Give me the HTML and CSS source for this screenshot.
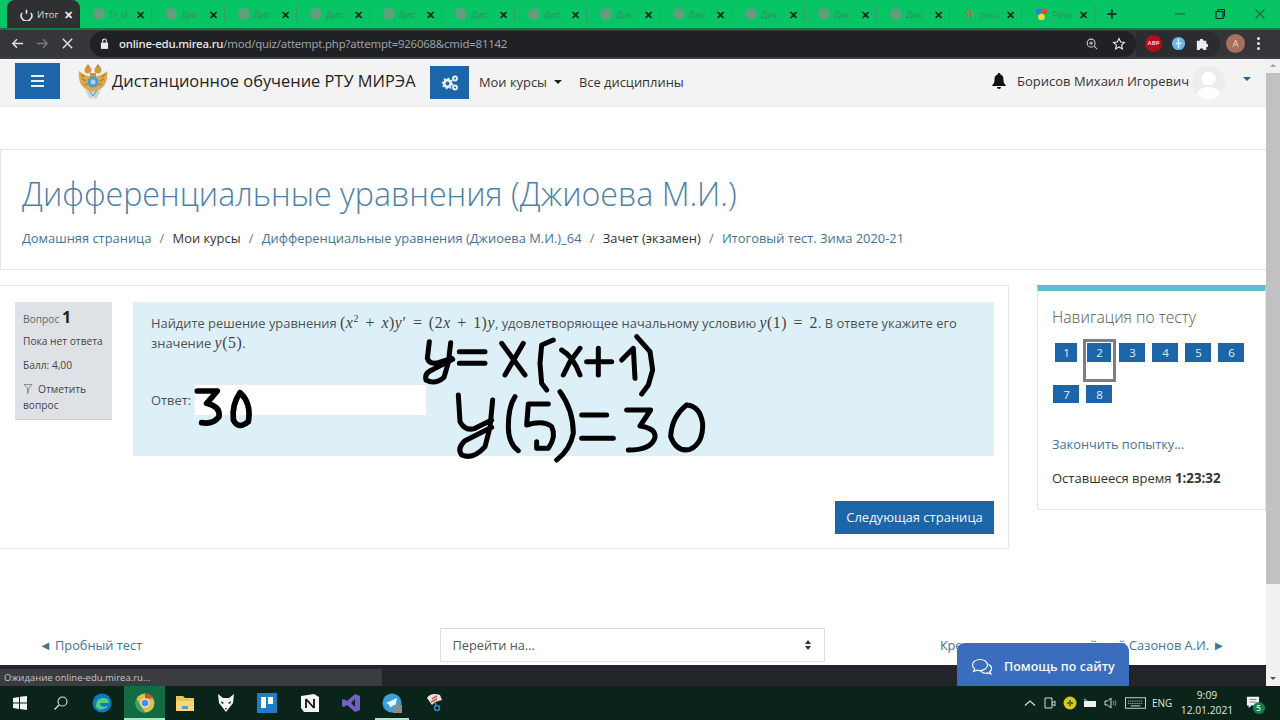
FILE: index.html
```html
<!DOCTYPE html>
<html lang="ru">
<head>
<meta charset="utf-8">
<title>Итоговый тест</title>
<link rel="stylesheet" href="styles.css">
</head>
<body>
<div class="screen">
  <div class="tabstrip">
    <div class="tab active"><svg class="fav" viewBox="0 0 16 16"><path d="M2.500 6a6.500 6.500 0 1 0 11 0M8 2v5" fill="none" stroke="#dfe1e5" stroke-width="2"/></svg><span class="tab-t">Итог</span><span class="tab-x">✕</span></div>
    <div class="tab"><i class="globe"></i><span class="tab-t">Tr_d</span><span class="tab-x">✕</span></div>
    <div class="tab"><i class="globe"></i><span class="tab-t">Дис</span><span class="tab-x">✕</span></div>
    <div class="tab"><i class="globe"></i><span class="tab-t">Дис</span><span class="tab-x">✕</span></div>
    <div class="tab"><i class="globe"></i><span class="tab-t">Дис</span><span class="tab-x">✕</span></div>
    <div class="tab"><i class="globe"></i><span class="tab-t">Дис</span><span class="tab-x">✕</span></div>
    <div class="tab"><i class="globe"></i><span class="tab-t">Дис</span><span class="tab-x">✕</span></div>
    <div class="tab"><i class="globe"></i><span class="tab-t">Дис</span><span class="tab-x">✕</span></div>
    <div class="tab"><i class="globe"></i><span class="tab-t">Дис</span><span class="tab-x">✕</span></div>
    <div class="tab"><i class="globe"></i><span class="tab-t">Дис</span><span class="tab-x">✕</span></div>
    <div class="tab"><i class="globe"></i><span class="tab-t">Дис</span><span class="tab-x">✕</span></div>
    <div class="tab"><i class="globe"></i><span class="tab-t">Дис</span><span class="tab-x">✕</span></div>
    <div class="tab"><i class="globe"></i><span class="tab-t">Дис</span><span class="tab-x">✕</span></div>
    <div class="tab"><span class="ya">Я</span><span class="tab-t">реш</span><span class="tab-x">✕</span></div>
    <div class="tab"><svg class="fav" viewBox="0 0 16 16"><circle cx="4.500" cy="4" r="3.500" fill="#2f7fd6"/><circle cx="11.500" cy="4" r="3.500" fill="#e2492f"/><circle cx="8" cy="11" r="4" fill="#f4d83a"/></svg><span class="tab-t">Реш</span><span class="tab-x">✕</span></div>
    <div class="newtab">+</div>
    <div class="winctl">
      <svg class="wc" viewBox="0 0 12 12"><path d="M1 6h10" stroke="#1d6a42" stroke-width="1.200"/></svg>
      <svg class="wc" viewBox="0 0 12 12"><path d="M2 3.500h7v7H2zM4 3.500V1.500h6.500V8H9" fill="none" stroke="#123" stroke-width="1.100"/></svg>
      <svg class="wc" viewBox="0 0 12 12"><path d="M1.500 1.500l9 9M10.500 1.500l-9 9" stroke="#1d6a42" stroke-width="1.200"/></svg>
    </div>
  </div>

  <div class="toolbar">
    <svg class="tb-ic" viewBox="0 0 16 16"><path d="M14 8H3M7.500 3.500L3 8l4.500 4.500" fill="none" stroke="#dee1e6" stroke-width="1.600"/></svg>
    <svg class="tb-ic" viewBox="0 0 16 16"><path d="M2 8h11M8.500 3.500L13 8l-4.500 4.500" fill="none" stroke="#777a7f" stroke-width="1.600"/></svg>
    <svg class="tb-ic" viewBox="0 0 16 16"><path d="M3 3l10 10M13 3L3 13" fill="none" stroke="#dee1e6" stroke-width="1.600"/></svg>
    <div class="omnibox">
      <svg class="lock" viewBox="0 0 10 12"><path d="M1 5h8v7H1z" fill="#e8eaed"/><path d="M3 5V3a2 2 0 0 1 4 0v2" fill="none" stroke="#e8eaed" stroke-width="1.300"/></svg>
      <span class="url"><b>online-edu.mirea.ru</b>/mod/quiz/attempt.php?attempt=926068&amp;cmid=81142</span>
      <svg class="omni-ic" viewBox="0 0 16 16"><circle cx="7" cy="7" r="4.500" fill="none" stroke="#c6c8cc" stroke-width="1.300"/><path d="M10.500 10.500L14 14M5 7h4M7 5v4" stroke="#c6c8cc" stroke-width="1.200"/></svg>
      <svg class="omni-ic" viewBox="0 0 16 16"><path d="M8 1.800l1.900 4 4.300.5-3.200 3 .9 4.300L8 11.400l-3.900 2.200.9-4.300-3.200-3 4.300-.5z" fill="none" stroke="#e8eaed" stroke-width="1.300"/></svg>
    </div>
    <div class="exts">
      <span class="abp">ABP</span>
      <svg class="ext" viewBox="0 0 16 16"><circle cx="8" cy="8" r="7" fill="#6fb7e3"/><path d="M8 3v10M5 8h6" stroke="#dff1fb" stroke-width="1.500"/></svg>
      <svg class="ext" viewBox="0 0 16 16"><path d="M2 5h3a2 2 0 0 1 4 0h3v3a2 2 0 0 1 0 4v3H9a2 2 0 0 0-4 0H2z" fill="#eceef0"/></svg>
    </div>
    <span class="profile">A</span>
    <span class="dots"><i></i><i></i><i></i></span>
  </div>

  <div class="viewport">
    <div class="page">
      <header class="navbar">
        <span class="burger"><i></i><i></i><i></i></span>
        <svg class="emblem" viewBox="0 0 30 36">
          <path d="M15 15C11 10 7 13 1 7c-1 7 1 13 4 16 3 3 6 3 8 5h4c2-2 5-2 8-5 3-3 5-9 4-16-6 6-10 3-14 8z" fill="#dca94f"/>
          <path d="M3 10l3 3M4 15l4 2M6 20l4 1M27 10l-3 3M26 15l-4 2M24 20l-4 1" stroke="#a9782f" stroke-width="1.200"/>
          <circle cx="10" cy="6" r="3.500" fill="#d19a41"/><circle cx="20" cy="6" r="3.500" fill="#d19a41"/>
          <path d="M8 3l2-3 2 3zM18 3l2-3 2 3z" fill="#b98632"/>
          <path d="M12 9h6v6h-6z" fill="#c9963f"/>
          <circle cx="15" cy="18" r="5.500" fill="#4f9bd3"/>
          <circle cx="15" cy="18" r="2.500" fill="#a9d6ee"/>
          <path d="M7 25c3 3 13 3 16 0l-2 5-3 5-3-2-3 2-3-5z" fill="#c6d4d6"/>
          <path d="M11 26l4 6 4-6" fill="none" stroke="#6a9aa3" stroke-width="1"/>
        </svg>
        <span class="brand">Дистанционное обучение РТУ МИРЭА</span>
        <span class="cogs"><svg viewBox="0 0 18 18"><circle cx="6.500" cy="9.500" r="3.300" fill="none" stroke="#e9f1f8" stroke-width="2.800"/><circle cx="6.500" cy="9.500" r="5.200" fill="none" stroke="#e9f1f8" stroke-width="1.400" stroke-dasharray="1.800 2.200"/><circle cx="14" cy="4.500" r="2" fill="none" stroke="#e9f1f8" stroke-width="1.900"/><circle cx="14" cy="13.500" r="2" fill="none" stroke="#e9f1f8" stroke-width="1.900"/></svg></span>
        <span class="nav-l">Мои курсы<i class="caret"></i></span>
        <span class="nav-l">Все дисциплины</span>
        <span class="nav-r">
          <svg class="bell" viewBox="0 0 14 16"><path d="M7 0a1.200 1.200 0 0 1 1.200 1.500C11 2.200 11.500 4.500 11.500 7c0 3 1 4 2.300 5.300V13H.2v-.7C1.500 11 2.500 10 2.500 7c0-2.500.5-4.800 3.300-5.500A1.200 1.200 0 0 1 7 0zM5 14h4a2 2 0 0 1-4 0z" fill="#111"/></svg>
          <span class="user">Борисов Михаил Игоревич</span>
          <svg class="avatar" viewBox="0 0 33 33"><defs><clipPath id="av"><circle cx="16.500" cy="16.500" r="16.500"/></clipPath></defs><g clip-path="url(#av)"><rect width="33" height="33" fill="#ececec"/><circle cx="16.500" cy="12.500" r="7" fill="#fff"/><path d="M4 33c0-9 6-12 12.500-12S29 24 29 33z" fill="#fff"/></g></svg>
          <i class="caret blue"></i>
        </span>
      </header>

      <section class="page-head">
        <h1>Дифференциальные уравнения (Джиоева М.И.)</h1>
        <nav class="crumbs">
          <a>Домашняя страница</a><s>/</s><span>Мои курсы</span><s>/</s><a>Дифференциальные уравнения (Джиоева М.И.)_64</a><s>/</s><span>Зачет (экзамен)</span><s>/</s><a>Итоговый тест. Зима 2020-21</a>
        </nav>
      </section>

      <div class="columns">
        <main class="quiz">
          <div class="q-row">
            <aside class="q-info">
              <p class="q-no">Вопрос <b>1</b></p>
              <p>Пока нет ответа</p>
              <p>Балл: 4,00</p>
              <p class="q-flag"><svg class="flag" viewBox="0 0 10 12"><path d="M1 1.500h8L6 5v1L4.500 11V5z" fill="none" stroke="#777" stroke-width=".8"/></svg>Отметить вопрос</p>
            </aside>
            <div class="q-body">
              <p class="q-text">Найдите решение уравнения <span class="m">(<i>x</i><sup>2</sup> + <i>x</i>)<i>y</i>′ = (2<i>x</i> + 1)<i>y</i></span>, удовлетворяющее начальному условию <span class="m"><i>y</i>(1) = 2</span>. В ответе укажите его значение <span class="m"><i>y</i>(5)</span>.</p>
              <div class="answer"><label>Ответ:</label><span class="a-input"></span></div>
            </div>
          </div>
          <div class="next-row"><span class="btn">Следующая страница</span></div>
        </main>
        <aside class="side">
          <h2>Навигация по тесту</h2>
          <div class="q-nav">
            <span class="qb">1</span><span class="qb cur">2</span><span class="qb">3</span><span class="qb">4</span><span class="qb">5</span><span class="qb">6</span><span class="qb">7</span><span class="qb">8</span>
          </div>
          <a class="finish">Закончить попытку...</a>
          <p class="timer">Оставшееся время <b>1:23:32</b></p>
        </aside>
      </div>

      <div class="jump">
        <a>◄ Пробный тест</a>
        <span class="select">Перейти на...<svg viewBox="0 0 8 12"><path d="M4 1l3 4H1zM4 11L1 7h6z" fill="#333"/></svg></span>
        <a><span class="tight">Кредитная сессия: английский</span> Сазонов А.И. ►</a>
      </div>
      <footer class="foot"><span>Информация (Вопросы)</span><span>Email: edu@mirea.ru</span></footer>
    </div>
    <div class="scrollbar"><span class="sb-up"></span><span class="sb-thumb"></span><span class="sb-dn"></span></div>
  </div>

  <div class="taskbar">
    <svg class="tk" viewBox="-2 -2 20 20"><path d="M1 3l6-1v5.500H1zM8 1.800L15 1v6.500H8zM1 8.500h6V14l-6-1zM8 8.500h7V15l-7-1z" fill="#f2f5f3"/></svg>
    <svg class="tk" viewBox="-2 -2 20 20"><circle cx="9.500" cy="6.500" r="4.500" fill="none" stroke="#dfe5e2" stroke-width="1.100"/><path d="M6 10l-4.500 4.500" stroke="#dfe5e2" stroke-width="1.200"/></svg>
    <svg class="tk tk-edge" viewBox="0 0 20 20"><circle cx="10" cy="10" r="9.500" fill="#0f78c8"/><path d="M4 13c0-6 4-8 7-8 4 0 6 2 6 5H8c0 3 3 5 8 3-2 4-12 5-12 0z" fill="#4ed07f"/></svg>
    <span class="tk-active"><svg class="tk" viewBox="0 0 20 20"><circle cx="10" cy="10" r="9.500" fill="#d8c34a"/><path d="M10 .5a9.500 9.500 0 0 1 8.500 5H10z" fill="#d9483b"/><path d="M1.500 5.500L6 13l4 6.500A9.500 9.500 0 0 1 1.500 5.500z" fill="#3ca35a"/><circle cx="10" cy="10" r="4.500" fill="#fff"/><circle cx="10" cy="10" r="3.500" fill="#4b8fe0"/></svg></span>
    <svg class="tk" viewBox="0 0 20 20"><path d="M1 3h7l2 2h9v13H1z" fill="#e9c659"/><path d="M1 8h18v10H1z" fill="#f3d779"/><path d="M7 13h6v3H7z" fill="#5a9bc9"/></svg>
    <svg class="tk" viewBox="0 0 20 20"><path d="M2 1l5 4h6l5-4-1 9-7 9-7-9z" fill="#f4f4f4"/><path d="M5 8l3 2-2 1zM15 8l-3 2 2 1zM9 15h2l-1 2z" fill="#111"/></svg>
    <svg class="tk tk-trello" viewBox="0 0 20 20"><rect width="20" height="20" fill="#1d7ec6"/><rect x="4" y="4" width="5" height="11" fill="#fff"/><rect x="11" y="4" width="5" height="7" fill="#fff"/></svg>
    <svg class="tk" viewBox="0 0 20 20"><path d="M1 3l13-2 5 3v15H4l-3-4z" fill="#f5f5f5"/><path d="M6 6v9M6 6l8 9M14 6v9" stroke="#111" stroke-width="1.800" fill="none"/></svg>
    <svg class="tk" viewBox="0 0 20 20"><path d="M14 1l5 2v14l-5 2-8-7-3 2-2-1V7l2-1 3 2zM14 6l-4 4 4 4z" fill="#7160c4"/></svg>
    <span class="tk-open"><svg class="tk" viewBox="0 0 20 20"><circle cx="10" cy="10" r="9.500" fill="#36a3d9"/><path d="M4 10l11-5-2 10-3-2-2 2-.5-3z" fill="#eaf6fc"/><rect x="11" y="12" width="9" height="8" fill="#8a8f8d"/></svg></span>
    <svg class="tk" viewBox="0 0 20 20"><path d="M3 5c2-4 8-5 13-3l2 5-7 2-3 3z" fill="#eae0dc"/><path d="M8 6l5-3M7 9l6-3" stroke="#c85b5b" stroke-width="1.500"/><circle cx="13" cy="15" r="2.500" fill="none" stroke="#3b8cd0" stroke-width="1.400"/><path d="M11 9l1 4" stroke="#3b8cd0" stroke-width="1.400"/></svg>
    <div class="tray">
      <svg class="tr" viewBox="0 0 14 14"><path d="M2 9.500L7 5l5 4.500" fill="none" stroke="#d5dcd8" stroke-width="1.200"/></svg>
      <svg class="tr" viewBox="0 0 14 14"><path d="M2 2h7v10H2zM9 7l3-2v5l-3-2" fill="none" stroke="#d5dcd8" stroke-width="1"/></svg>
      <svg class="tr" viewBox="0 0 14 14"><circle cx="7" cy="7" r="6.500" fill="#d8c520"/><path d="M7 4v6M4 7h6" stroke="#3c7a1e" stroke-width="2"/></svg>
      <svg class="tr" viewBox="0 0 14 14"><rect x="1" y="5" width="12" height="6" fill="#eef2f0"/><path d="M1 3l3 2" stroke="#6db7e0" stroke-width="1.500"/></svg>
      <svg class="tr" viewBox="0 0 14 14"><path d="M2 5h2.500L8 2v10L4.500 9H2z" fill="none" stroke="#d5dcd8"/><path d="M10 5q1.500 2 0 4M12 4q2 3 0 6" fill="none" stroke="#7f8d86"/></svg>
      <svg class="kb" viewBox="0 0 22 12"><rect x=".5" y=".5" width="21" height="11" fill="none" stroke="#cfd6d2"/><path d="M3 4h16M3 6.500h16" stroke="#cfd6d2" stroke-dasharray="1 1"/><path d="M6 9h10" stroke="#cfd6d2"/></svg>
      <span class="eng">ENG</span>
      <span class="clock"><span>9:09</span><span>12.01.2021</span></span>
      <span class="notify"><svg viewBox="0 0 16 15"><path d="M1 1h14v10H6l-3 3v-3H1z" fill="#f1f3f2"/><path d="M4 4h8M4 7h8" stroke="#6f7a75"/></svg><b>5</b></span>
    </div>
  </div>

  <div class="status">Ожидание online-edu.mirea.ru...</div>
  <div class="help"><svg viewBox="0 0 22 18"><path d="M9 1.500c-4 0-7.500 2.300-7.500 5.500 0 1.600.8 3 2.200 4L2.500 13.500l3.500-1.300c1 .3 2 .4 3 .4 4 0 7.500-2.300 7.500-5.500S13 1.500 9 1.500z" fill="none" stroke="#fff" stroke-width="1.200"/><path d="M17.500 6.500c2 .8 3 2.300 3 4 0 1.300-.6 2.400-1.700 3.300l1 2.200-3-1.100c-3 .8-6-.2-7.300-2.400" fill="none" stroke="#fff" stroke-width="1.200"/></svg>Помощь по сайту</div>

  <svg class="ink" viewBox="0 0 1280 720" role="img" aria-label="y = x(x+1), y(5) = 30">
    <g fill="none" stroke="#000" stroke-width="15" stroke-linecap="round" stroke-linejoin="round" transform="translate(410 320) scale(.33333)">
      <path d="M58 65L52 115Q58 135 85 128L125 115M122 68L115 128L102 172Q75 195 48 180Q42 158 70 148L128 118"/>
      <path d="M148 95H225M148 130H225"/>
      <path d="M275 70L345 165M340 70L285 165"/>
      <path d="M430 60L395 75L390 130L395 190L410 210"/>
      <path d="M510 85L480 125L460 165M455 90Q490 110 510 165"/>
      <path d="M530 125H605M565 85V165"/>
      <path d="M635 120L670 85L675 175"/>
      <path d="M680 50L720 95L728 150L715 195L695 222"/>
      <path d="M145 225L150 305Q165 335 195 325L245 300M248 240L240 322L225 380Q190 420 155 405Q140 385 165 362L245 322"/>
      <path d="M315 230Q295 260 295 320Q295 370 325 392"/>
      <path d="M415 252H355L350 315Q400 300 425 320Q440 350 415 385L380 385V365"/>
      <path d="M450 215Q490 270 490 340Q480 390 440 420"/>
      <path d="M515 285H590M515 355H610"/>
      <path d="M650 270H722L690 318Q738 325 735 352Q725 390 655 390"/>
      <path d="M830 255Q785 290 782 350Q800 398 840 388Q880 370 878 310Q870 258 830 255"/>
    </g>
    <g fill="none" stroke="#000" stroke-width="17" stroke-linecap="round" stroke-linejoin="round" transform="translate(0 280) scale(.33333)">
      <path d="M592 333H652L620 370Q662 380 657 410Q640 434 605 428"/>
      <path d="M720 338Q695 375 700 420Q715 450 745 425Q755 370 720 338"/>
    </g>
  </svg>
</div>
</body>
</html>
```
FILE: styles.css
```css
* { box-sizing: border-box; }
html, body { margin: 0; padding: 0; height: 100%; overflow: hidden; background: #fff; }
body { font-family: "Open Sans", "Noto Sans", "Liberation Sans", sans-serif; color: #373a3c; }
p, h1, h2 { margin: 0; }
.screen { position: relative; width: 1280px; height: 720px; display: flex; flex-direction: column; overflow: hidden; }

/* browser chrome */
.tabstrip { height: 28px; background: #07c465; display: flex; align-items: center; padding-left: 7px; flex: none; }
.tab { width: 72.500px; height: 28px; display: flex; align-items: center; padding: 0 7px 0 13px; gap: 4px; font-size: 9.500px; color: #2f8f5e; position: relative; flex: none; }
.tab::after { content: ""; position: absolute; right: 0; top: 5px; height: 17px; width: 1px; background: #2f9f68; }
.tab.active { background: #2f3032; color: #d9dbde; border-radius: 8px 8px 0 0; }
.tab.active::after { display: none; }
.fav { width: 13px; height: 13px; flex: none; }
.globe { width: 12px; height: 12px; border-radius: 50%; background: #5f9f7d; flex: none; }
.ya { width: 13px; color: #b9722a; font-size: 13px; text-align: center; flex: none; }
.tab-t { flex: 1; overflow: hidden; white-space: nowrap; }
.tab-x { font-size: 11px; font-weight: 700; color: #10291d; }
.tab.active .tab-x { color: #eceff1; }
.newtab { margin-left: 12px; font-size: 19px; font-weight: 600; color: #10331f; line-height: 28px; }
.winctl { margin-left: auto; display: flex; gap: 28px; padding-right: 14px; }
.wc { width: 12px; height: 12px; }

.toolbar { height: 31px; background: #35363a; border-top: 2px solid #0a7a48; border-bottom: 2px solid #3c3d40; display: flex; align-items: center; padding-left: 10px; flex: none; }
.tb-ic { width: 15px; height: 15px; margin-right: 10px; flex: none; }
.omnibox { margin-left: 5px; width: 1046px; height: 26px; background: #202124; border-radius: 13px; display: flex; align-items: center; padding: 0 10px; flex: none; }
.lock { width: 9px; height: 11px; flex: none; margin-right: 10px; }
.url { font-size: 11.400px; color: #9aa0a6; flex: 1; white-space: nowrap; font-family: "Noto Sans", "Open Sans", sans-serif; letter-spacing: -.2px; }
.url b { font-weight: 500; color: #e8eaed; }
.omni-ic { width: 14px; height: 14px; margin-left: 13px; flex: none; }
.exts { width: 84px; height: 26px; background: #2b2c2f; border-radius: 0 13px 13px 0; display: flex; align-items: center; gap: 9px; padding-left: 9px; flex: none; }
.abp { width: 17px; height: 17px; border-radius: 50%; background: #b50d1c; color: #f2c9cc; font-size: 6px; font-weight: 700; text-align: center; line-height: 17px; flex: none; }
.ext { width: 15px; height: 15px; flex: none; }
.profile { width: 19px; height: 19px; border-radius: 50%; background: #a8705c; color: #eadcd6; font-size: 9px; text-align: center; line-height: 19px; margin-left: 6px; flex: none; }
.dots { display: flex; flex-direction: column; gap: 2px; margin-left: 12px; }
.dots i { width: 3px; height: 3px; background: #e8eaed; border-radius: 50%; }

/* page */
.viewport { flex: 1; min-height: 0; display: flex; }
.page { width: 1266px; height: 100%; display: flex; flex-direction: column; flex: none; overflow: hidden; }
.navbar { height: 48px; background: #f3f3f3; display: flex; align-items: center; padding-left: 15px; flex: none; box-shadow: inset 0 -1px 0 #eee; border-top: 1px solid #f9f9f9; }
.burger { width: 45px; height: 36px; background: #1b65a8; display: flex; flex-direction: column; justify-content: center; align-items: center; gap: 3px; flex: none; margin-top: -5px; }
.burger i { width: 13px; height: 2px; background: #e8f1f8; }
.emblem { width: 30px; height: 36px; margin-left: 18px; flex: none; margin-top: -4px; }
.brand { font-size: 16.400px; color: #222; margin-left: 4px; width: 318px; white-space: nowrap; margin-top: -6px; }
.cogs { width: 39px; height: 33px; background: #1b65a8; display: flex; align-items: center; justify-content: center; flex: none; margin-top: -2px; }
.cogs svg { width: 18px; height: 18px; }
.nav-l { font-size: 12.900px; color: #333; margin-left: 10px; display: flex; align-items: center; white-space: nowrap; margin-right: 17px; margin-top: -4px; }
.nav-l + .nav-l { margin-left: 0; }
.caret { display: inline-block; width: 0; height: 0; border: 4px solid transparent; border-top-color: #222; border-bottom: 0; margin-left: 7px; }
.caret.blue { border-top-color: #1b65a8; margin-left: 18px; margin-top: -4px; }
.nav-r { margin-left: auto; display: flex; align-items: center; padding-right: 15px; margin-top: -5px; }
.bell { width: 14px; height: 16px; margin-right: 11px; flex: none; }
.user { font-size: 13px; color: #333; white-space: nowrap; width: 175px; }
.avatar { width: 33px; height: 33px; flex: none; margin-top: 2px; }

.page-head { margin-top: 42px; height: 121px; border: 1px solid #e5e5e5; border-right: 0; padding: 23px 21px 0; flex: none; }
h1 { font-size: 32.200px; font-weight: 300; color: #4e7fa8; line-height: 42px; white-space: nowrap; }
.crumbs { font-size: 12.900px; margin-top: 14px; color: #333; white-space: nowrap; display: flex; gap: 8.250px; }
.crumbs a { color: #44739a; }
.crumbs s { text-decoration: none; color: #777; }

.columns { display: flex; align-items: flex-start; margin-top: 15px; flex: none; height: 343px; }
.quiz { width: 1009px; height: 264px; border: 1px solid #e5e5e5; border-left: 0; padding: 16px 14px 0 15px; flex: none; }
.q-row { display: flex; gap: 21px; }
.q-info { width: 97px; height: 118px; background: #dee2e6; padding: 7px 0 0 8px; font-size: 10.200px; color: #444; flex: none; border-bottom: 1px solid #ced4da; }
.q-info p { line-height: 16px; margin-bottom: 8px; }
.q-info .q-no { color: #666; margin-bottom: 6px; }
.q-no b { font-size: 16px; color: #222; }
.q-info .q-flag { margin: 0; width: 82px; }
.flag { width: 10px; height: 12px; margin-right: 5px; vertical-align: -2px; }
.q-body { width: 861px; height: 154px; background: #def0f7; padding: 11px 18px; font-size: 12.900px; color: #4d5156; flex: none; }
.q-text { line-height: 20px; }
.m { font-family: "Liberation Serif", serif; font-size: 15.800px; color: #3f4347; letter-spacing: .55px; word-spacing: 2px; }
.m sup { font-size: 10px; line-height: 0; }
.answer { display: flex; align-items: center; margin-top: 31px; }
.answer label { width: 43px; }
.a-input { width: 233px; height: 32px; background: #fff; border: 1px solid #e8eef1; }
.next-row { display: flex; justify-content: flex-end; margin-top: 45px; }
.btn { width: 159px; height: 33px; background: #1b65a8; color: #f3f7fa; font-size: 13px; text-align: center; line-height: 33px; }

.side { margin-left: 28px; width: 229px; height: 225px; border: 1px solid #e5e5e5; border-top: 6px solid #5bbdd0; padding: 15px 8px 0 14px; flex: none; }
.side h2 { font-size: 15.700px; font-weight: 300; color: #555; line-height: 22px; }
.q-nav { display: flex; flex-wrap: wrap; margin: 11px 0 0 -2px; width: 198px; }
.qb { width: 33px; height: 43px; font-size: 11.500px; color: #e4eef6; text-align: center; position: relative; line-height: 19px; padding-top: 4px; isolation: isolate; }
.qb::before { content: ""; position: absolute; left: 3px; right: 4px; top: 4px; height: 19px; background: #1b65a8; z-index: -1; }
.qb:nth-child(1)::before { left: 5px; right: 6px; }
.qb:nth-child(2)::before { left: 4px; right: 5px; }
.qb.cur { box-shadow: inset 0 0 0 3px #7a7f85; }
.qb:nth-child(n+7) { height: 28px; padding-top: 3px; }
.qb:nth-child(n+7)::before { top: 3px; height: 18px; }
.finish { display: block; margin-top: 25px; font-size: 12.800px; color: #44739a; }
.timer { font-size: 13px; color: #333; margin-top: 16px; }
.timer b { font-size: 13.300px; }

.jump { display: flex; justify-content: space-between; align-items: center; height: 34px; padding: 0 41px 0 39px; font-size: 12.800px; color: #44739a; flex: none; }
.jump a { width: 285px; white-space: nowrap; }
.jump a:last-child { text-align: right; }
.tight { letter-spacing: -.18px; }
.select { width: 385px; height: 34px; border: 1px solid #ddd; padding: 0 12px; display: flex; align-items: center; justify-content: space-between; color: #555; }
.select svg { width: 8px; height: 12px; }
.foot { flex: 1; background: #212529; margin-top: 3px; color: #e4e6e8; font-size: 13px; padding: 17px 0 0 394px; display: flex; gap: 301px; white-space: nowrap; }

.scrollbar { width: 14px; background: #f1f1f1; display: flex; flex-direction: column; flex: none; }
.sb-up, .sb-dn { height: 14px; position: relative; flex: none; }
.sb-up::after, .sb-dn::after { content: ""; position: absolute; left: 4px; top: 5px; border: 3px solid transparent; }
.sb-up::after { border-bottom-color: #a3a3a3; border-top: 0; }
.sb-dn::after { border-top-color: #505050; border-bottom: 0; }
.sb-thumb { height: 511px; background: #c1c1c1; }
.sb-dn { margin-top: auto; }

/* taskbar */
.taskbar { height: 34px; background: #0b2419; display: flex; align-items: center; flex: none; padding-left: 10px; position: relative; z-index: 3; }
.tk { width: 20px; height: 20px; flex: none; margin-right: 21px; }
.tk-edge { margin-right: 22px; }
.tk-trello { margin-right: 23px; }
.tk-active, .tk-open { display: flex; align-items: center; height: 34px; flex: none; position: relative; width: 41px; }
.tk-active { background: #136b43; padding-left: 11px; margin-left: -10px; margin-right: 10px; }
.tk-active .tk, .tk-open .tk { margin: 0; }
.tk-open { margin-left: -10px; margin-right: 11px; padding-left: 10px; }
.tk-active::after, .tk-open::after { content: ""; position: absolute; left: 0; right: 0; bottom: 0; height: 2px; background: #a9e8c6; }
.tk-open::after { left: 3px; right: 4px; }
.tray { margin-left: auto; display: flex; align-items: center; color: #dfe5e2; gap: 6px; padding-right: 19.500px; }
.tr { width: 14px; height: 14px; }
.kb { width: 21px; height: 12px; margin-left: 1.500px; }
.eng { font-size: 10px; margin-left: .5px; width: 22px; }
.clock { display: flex; flex-direction: column; align-items: center; font-size: 10.300px; line-height: 15px; margin-left: 2px; width: 50px; }
.notify { position: relative; width: 15px; height: 14px; margin-left: 7.500px; }
.notify svg { width: 14px; height: 13px; display: block; }
.notify b { position: absolute; left: 7px; top: 6px; width: 12px; height: 12px; border-radius: 50%; background: #15804f; color: #e6f3ec; font-size: 8px; text-align: center; line-height: 12px; font-weight: 600; }

/* overlays */
.status { position: absolute; left: 0; top: 669px; width: 382px; height: 18px; background: #3a3c3f; color: #c4c6c9; font-size: 9.500px; line-height: 18px; padding-left: 4px; z-index: 2; }
.help { position: absolute; left: 957px; top: 643px; width: 172px; height: 44px; background: #3a6dbd; border-radius: 8px 8px 0 0; color: #f3f6fb; font-size: 12.500px; font-weight: 600; display: flex; align-items: center; padding: 3px 0 0 14px; gap: 11px; z-index: 2; }
.help svg { width: 22px; height: 18px; flex: none; }
.ink { position: absolute; left: 0; top: 0; width: 1280px; height: 720px; pointer-events: none; z-index: 4; }
```
